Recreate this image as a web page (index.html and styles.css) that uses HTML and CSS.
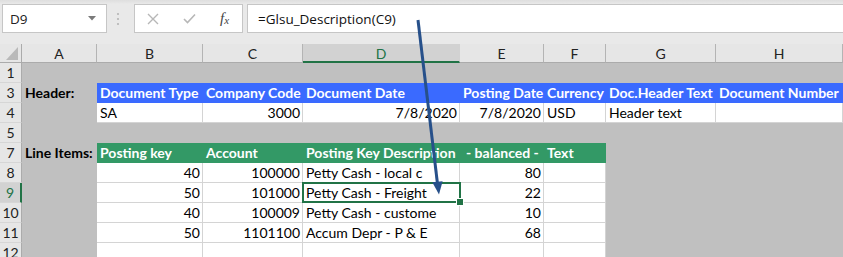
FILE: index.html
```html
<!DOCTYPE html>
<html>
<head>
<meta charset="utf-8">
<link rel="stylesheet" href="styles.css">
</head>
<body>
<div class="app">
  <div class="fbar">
    <div class="namebox"><span>D9</span><svg class="dd" width="8" height="5" viewBox="0 0 8 5"><path d="M0 0H8L4 4.5Z" fill="#7a7a7a"/></svg></div>
    <svg class="grip" width="4" height="14" viewBox="0 0 4 14"><circle cx="2" cy="2" r="1.1" fill="#b5b5b5"/><circle cx="2" cy="7" r="1.1" fill="#b5b5b5"/><circle cx="2" cy="12" r="1.1" fill="#b5b5b5"/></svg>
    <div class="btns">
      <svg width="12" height="12" viewBox="0 0 12 12"><path d="M1 1L11 11M11 1L1 11" stroke="#b7b7b7" stroke-width="1.4" fill="none"/></svg>
      <svg width="13" height="11" viewBox="0 0 13 11"><path d="M1 6L4.5 9.5L12 1.5" stroke="#b7b7b7" stroke-width="1.6" fill="none"/></svg>
      <span class="fx">f<sub>x</sub></span>
    </div>
    <div class="finput">=Glsu_Description(C9)</div>
  </div>
  <div class="sheet">
    <div class="corner"><svg width="12" height="13" viewBox="0 0 12 13"><path d="M12 0V13H0Z" fill="#b9b9b9"/></svg></div>
    <div class="ch">A</div><div class="ch">B</div><div class="ch">C</div><div class="ch chs">D</div><div class="ch">E</div><div class="ch">F</div><div class="ch">G</div><div class="ch">H</div>

    <div class="rh">1</div><div class="g"></div><div class="g"></div><div class="g"></div><div class="g"></div><div class="g"></div><div class="g"></div><div class="g"></div><div class="g"></div>

    <div class="rh">3</div><div class="g lbl">Header:</div><div class="hb">Document Type</div><div class="hb">Company Code</div><div class="hb">Document Date</div><div class="hb">Posting Date</div><div class="hb">Currency</div><div class="hb">Doc.Header Text</div><div class="hb">Document Number</div>

    <div class="rh">4</div><div class="g"></div><div class="w">SA</div><div class="w num">3000</div><div class="w num">7/8/2020</div><div class="w num">7/8/2020</div><div class="w">USD</div><div class="w">Header text</div><div class="w"></div>

    <div class="rh">5</div><div class="g"></div><div class="g"></div><div class="g"></div><div class="g"></div><div class="g"></div><div class="g"></div><div class="g"></div><div class="g"></div>

    <div class="rh">7</div><div class="g lbl">Line Items:</div><div class="hg">Posting key</div><div class="hg">Account</div><div class="hg">Posting Key Description</div><div class="hg hgb">- balanced -</div><div class="hg">Text</div><div class="g"></div><div class="g"></div>

    <div class="rh">8</div><div class="g"></div><div class="w num">40</div><div class="w num">100000</div><div class="w">Petty Cash - local c</div><div class="w num">80</div><div class="w"></div><div class="g"></div><div class="g"></div>

    <div class="rh rhs">9</div><div class="g"></div><div class="w num">50</div><div class="w num">101000</div><div class="w sel">Petty Cash - Freight</div><div class="w num">22</div><div class="w"></div><div class="g"></div><div class="g"></div>

    <div class="rh">10</div><div class="g"></div><div class="w num">40</div><div class="w num">100009</div><div class="w">Petty Cash - custome</div><div class="w num">10</div><div class="w"></div><div class="g"></div><div class="g"></div>

    <div class="rh">11</div><div class="g"></div><div class="w num">50</div><div class="w num">1101100</div><div class="w">Accum Depr - P &amp; E</div><div class="w num">68</div><div class="w"></div><div class="g"></div><div class="g"></div>

    <div class="rh">12</div><div class="g"></div><div class="w"></div><div class="w"></div><div class="w"></div><div class="w"></div><div class="w"></div><div class="g"></div><div class="g"></div>
  </div>
  <svg class="arrow" width="843" height="257" viewBox="0 0 843 257">
    <line x1="418" y1="20" x2="437.4" y2="183" stroke="#27508a" stroke-width="3"/>
    <path d="M432.3 182.2L442.6 181.2L439 194.5Z" fill="#27508a"/>
  </svg>
</div>
</body>
</html>
```
FILE: styles.css
```css
* { box-sizing: border-box; }
body {
  margin: 0;
  width: 843px;
  height: 257px;
  overflow: hidden;
  background: #e6e6e6;
  font-family: Lato, "Liberation Sans", sans-serif;
  font-size: 14px;
  color: #000;
}
.app { position: relative; width: 843px; height: 257px; overflow: hidden; }

.fbar {
  display: flex;
  align-items: stretch;
  height: 44px;
  padding: 4px 0 11px 2px;
  background: linear-gradient(#dedede 0, #e9e9e9 4px, #e9e9e9 100%);
}
.namebox {
  width: 105px;
  background: #fff;
  border: 1px solid #c6c6c6;
  display: flex;
  align-items: center;
  justify-content: space-between;
  padding: 0 10px 0 7px;
  font-family: "Open Sans", sans-serif;
  font-size: 13.5px;
  color: #222;
}
.grip { align-self: center; margin: 0 14px 0 9px; }
.btns {
  width: 109px;
  background: #fff;
  border: 1px solid #c6c6c6;
  display: flex;
  align-items: center;
  padding-left: 12px;
  gap: 24px;
}
.fx {
  font-family: "Liberation Serif", serif;
  font-style: italic;
  font-size: 15px;
  color: #444;
}
.fx sub { font-size: 11px; vertical-align: -1px; }
.finput {
  flex: 1;
  margin-left: 4px;
  background: #fff;
  border: 1px solid #c6c6c6;
  border-right: none;
  display: flex;
  align-items: center;
  padding-left: 10px;
  font-family: "Open Sans", sans-serif;
  font-size: 13.5px;
  color: #111;
}

.sheet {
  display: grid;
  grid-template-columns: 22px 75px 106px 100px 157px 84px 62px 110px 127px;
  grid-template-rows: 19px repeat(10, 20px);
  background: #c0c0c0;
}
.sheet > div { line-height: 20px; white-space: nowrap; overflow: hidden; }
.corner {
  background: #e6e6e6;
  border-right: 1px solid #ababab;
  border-bottom: 1px solid #ababab;
  display: flex;
  align-items: flex-end;
  justify-content: flex-end;
  padding: 0 3px 2px 0;
}
.ch {
  background: #e6e6e6;
  border-right: 1px solid #b4b4b4;
  border-bottom: 1px solid #ababab;
  text-align: center;
  line-height: 19px !important;
  color: #222;
}
.ch.chs {
  background: #d2d2d2;
  color: #217346;
  border-right-color: #d2d2d2;
  border-bottom: 2px solid #217346;
}
.rh {
  background: #e6e6e6;
  border-right: 1px solid #ababab;
  border-bottom: 1px solid #d6d6d6;
  text-align: center;
  color: #222;
}
.rh.rhs {
  background: #d2d2d2;
  color: #217346;
  border-right: 2px solid #217346;
}
.g { background: #c0c0c0; }
.lbl { font-weight: bold; padding-left: 3px; color: #000; }
.hb {
  background: #3a6aff;
  color: #fff;
  font-weight: bold;
  padding-left: 3px;
}
.hg {
  background: #339966;
  color: #fff;
  font-weight: bold;
  padding-left: 3px;
}
.hgb { padding-left: 6px; }
.w {
  background: #fff;
  border-right: 1px solid #d4d4d4;
  border-bottom: 1px solid #d4d4d4;
  padding: 0 3px;
}
.num { text-align: right; padding-right: 2px; }
.sheet > .sel { position: relative; overflow: visible; }
.sel::before {
  content: "";
  position: absolute;
  left: -1px; top: -1px; right: -2px; bottom: -1px;
  border: 2px solid #217346;
}
.sel::after {
  content: "";
  position: absolute;
  right: -5px; bottom: -4px;
  width: 6px; height: 6px;
  background: #217346;
  border: 1px solid #fff;
}
.arrow { position: absolute; left: 0; top: 0; pointer-events: none; }
```
